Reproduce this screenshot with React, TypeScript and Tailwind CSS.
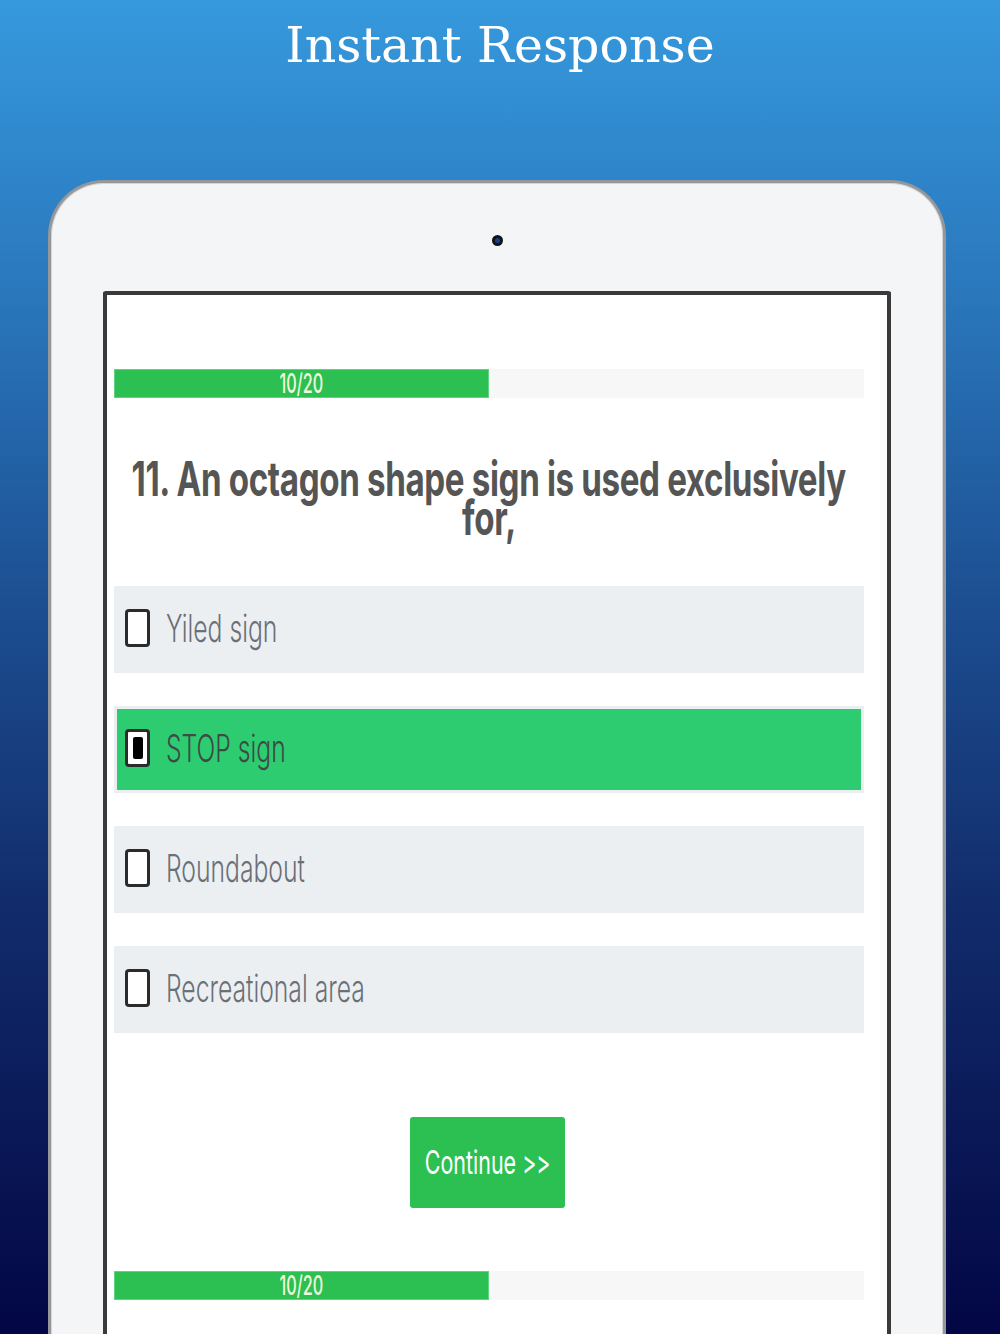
import React from 'react';

const options = [
  { label: 'Yiled sign', picked: false },
  { label: 'STOP sign', picked: true },
  { label: 'Roundabout', picked: false },
  { label: 'Recreational area', picked: false },
];

function ProgressBar() {
  return (
    <div className="flex h-[29px] w-[750px] bg-[#f7f7f7]">
      <div className="flex w-[375px] items-center justify-center border border-[#5fd47e] bg-[#2cc052]">
        <span className="inline-block origin-center scale-x-[0.6] text-[27px] font-medium leading-none text-[#eef9dc]">
          10/20
        </span>
      </div>
    </div>
  );
}

function CheckBox({ picked }: { picked: boolean }) {
  return (
    <div className="flex h-[38px] w-[25px] shrink-0 items-center justify-center rounded-[4px] border-[3px] border-[#2b2b2b] bg-white">
      {picked && <div className="h-[22px] w-[10px] rounded-[2px] bg-black" />}
    </div>
  );
}

function Option({ label, picked }: { label: string; picked: boolean }) {
  return (
    <div className="h-[87px] w-[750px] bg-[#eceff1] p-[3px]">
      <div className={`flex h-full items-center pl-[8px] pb-[4px] ${picked ? 'bg-[#2ecc71]' : ''}`}>
        <CheckBox picked={picked} />
        <span
          className={`ml-[16px] inline-block origin-left scale-x-[0.65] whitespace-nowrap text-[38px] font-light leading-none ${
            picked ? 'text-[#3d4a45]' : 'text-[#6b6f78]'
          }`}
        >
          {label}
        </span>
      </div>
    </div>
  );
}

export default function App() {
  return (
    <div className="h-[1334px] w-[1000px] overflow-hidden bg-[linear-gradient(to_bottom,#3699dd_0%,#2a77bc_22%,#1c4f92_45%,#122d6c_67%,#030645_100%)] font-['Inter',sans-serif]">
      <div className="flex h-[180px] justify-center pt-[14px]">
        <h1 className="font-['DejaVu_Serif',serif] text-[49px] leading-[64px] text-white">
          Instant Response
        </h1>
      </div>

      <div className="ml-[48px] h-[1200px] w-[898px] rounded-t-[56px] border-[3px] border-b-0 border-[#96979b] bg-[#f4f5f7] shadow-[inset_0_0_0_1px_#d4d5d8]">
        <div className="flex h-[108px] items-start justify-center pt-[52px]">
          <div className="flex h-[11px] w-[11px] items-center justify-center rounded-full bg-[#111418]">
            <div className="h-[5px] w-[5px] rounded-full bg-[#1d3c8c]" />
          </div>
        </div>

        <div className="ml-[52px] h-[1100px] w-[788px] rounded-[3px] border-4 border-b-0 border-[#3a3a3a] bg-white pl-[7px] pt-[74px]">
          <ProgressBar />

          <div className="flex h-[188px] w-[750px] flex-col items-center pt-[60px] text-[#555555]">
            <span className="inline-block origin-center scale-x-[0.69] whitespace-nowrap text-[48px] font-bold leading-[42px] tracking-[-0.5px]">
              11. An octagon shape sign is used exclusively
            </span>
            <span className="inline-block origin-center scale-x-[0.69] whitespace-nowrap text-[48px] font-bold leading-[36px] tracking-[-0.5px]">
              for,
            </span>
          </div>

          <div className="flex flex-col gap-[33px]">
            {options.map((o) => (
              <Option key={o.label} label={o.label} picked={o.picked} />
            ))}
          </div>

          <div className="flex w-[750px] justify-center pr-[3px] pt-[84px]">
            <button className="flex h-[91px] w-[155px] items-center justify-center rounded-[3px] bg-[#2cc052]">
              <span className="inline-block origin-center scale-x-[0.65] whitespace-nowrap text-[33px] leading-none text-white">
                Continue &gt;&gt;
              </span>
            </button>
          </div>

          <div className="pt-[63px]">
            <ProgressBar />
          </div>
        </div>
      </div>
    </div>
  );
}
